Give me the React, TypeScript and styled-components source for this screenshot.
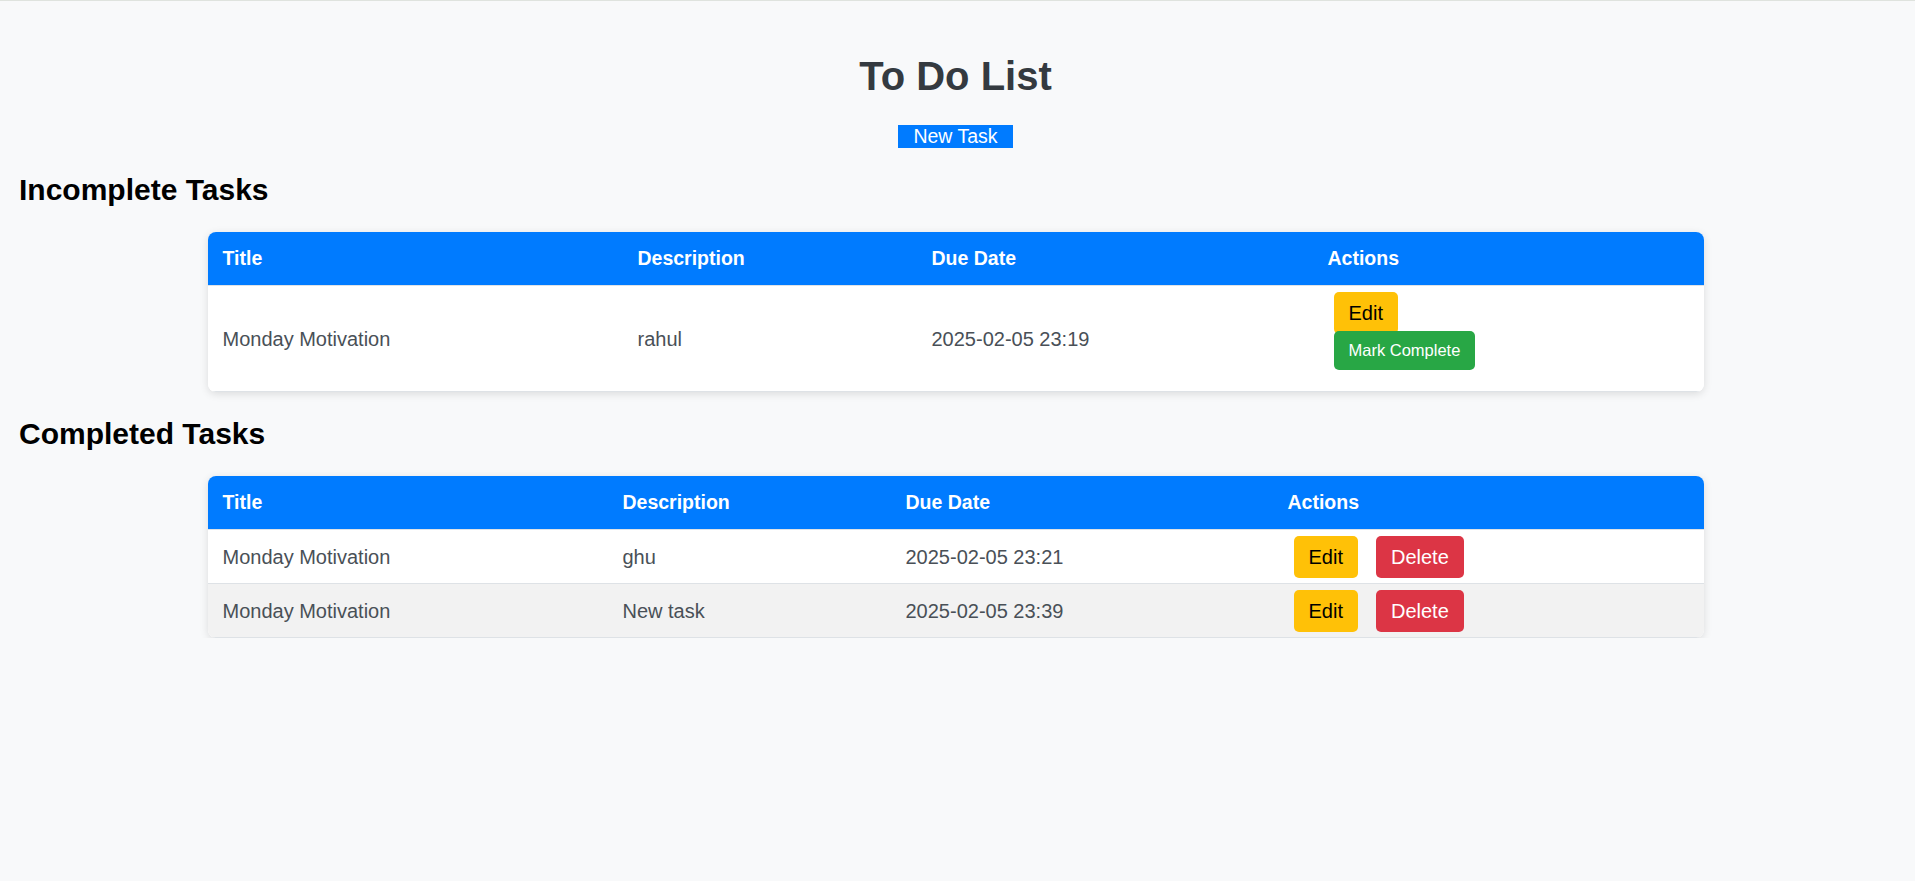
import styled, { createGlobalStyle } from "styled-components";

const GlobalStyle = createGlobalStyle`
  body {
    margin: 0;
    background-color: #f8f9fa;
    border-top: 1px solid #dfe3de;
    font-family: "Liberation Sans", Arial, sans-serif;
  }
`;

const Page = styled.div`
  display: flex;
  flex-direction: column;
  padding: 0 23px 0 19px;
`;

const Title = styled.h1`
  margin: 52px 0 26px;
  text-align: center;
  font-size: 40px;
  line-height: 46px;
  font-weight: bold;
  color: #343a40;
`;

const NewTaskButton = styled.button`
  align-self: center;
  padding: 0 15px;

  font-family: inherit;
  font-size: 19.5px;
  line-height: 23px;
  color: #fff;

  border: none;
  border-radius: 0;
  background-color: #007bff;
  cursor: pointer;
`;

const SectionHeading = styled.h2`
  margin: 25px 0 24.5px;
  font-size: 30px;
  line-height: 34.5px;
  font-weight: bold;
  color: #000;
`;

const Table = styled.table`
  width: 1496px;
  align-self: center;
  table-layout: fixed;
  border-collapse: separate;
  border-spacing: 0;

  background-color: #fff;
  border-radius: 8px;
  overflow: hidden;
  box-shadow: 0 2px 9px rgba(0, 0, 0, 0.12);
`;

const Col = styled.col<{ $width: number }>`
  width: ${(p) => p.$width}px;
`;

const HeadCell = styled.th`
  padding: 15px;
  text-align: left;
  font-size: 19.5px;
  line-height: 23px;
  font-weight: bold;
  color: #fff;
  background-color: #007bff;
  border-bottom: 1px solid #dee2e6;
`;

const Row = styled.tr<{ $striped?: boolean }>`
  background-color: ${(p) => (p.$striped ? "#f2f2f2" : "#fff")};
`;

const Cell = styled.td`
  padding: 6px 15px 5px;
  font-size: 20px;
  line-height: 23px;
  color: #495057;
  vertical-align: middle;
  border-bottom: 1px solid #dee2e6;
`;

const Actions = styled.div<{ $stacked?: boolean }>`
  display: flex;
  flex-direction: ${(p) => (p.$stacked ? "column" : "row")};
  align-items: flex-start;
  gap: ${(p) => (p.$stacked ? "0" : "18px")};
  margin-left: 6px;
  padding-bottom: ${(p) => (p.$stacked ? "16px" : "0")};
`;

const colors = {
  edit: { bg: "#ffc107", fg: "#000" },
  delete: { bg: "#dc3545", fg: "#fff" },
  complete: { bg: "#28a745", fg: "#fff" },
};

const ActionButton = styled.button<{ $kind: "edit" | "delete" }>`
  padding: 9.5px 15px;
  font-family: inherit;
  font-size: 20px;
  line-height: 23px;
  color: ${(p) => colors[p.$kind].fg};

  border: none;
  border-radius: 5px;
  background-color: ${(p) => colors[p.$kind].bg};
  cursor: pointer;
`;

// sits 3px up into the Edit button, like in the original
const CompleteButton = styled.button`
  margin-top: -3px;
  padding: 10px 15px;
  font-family: inherit;
  font-size: 16.5px;
  line-height: 19px;
  color: ${colors.complete.fg};

  border: none;
  border-radius: 5px;
  background-color: ${colors.complete.bg};
  cursor: pointer;
`;

type Task = {
  title: string;
  description: string;
  dueDate: string;
};

const incompleteTasks: Task[] = [
  { title: "Monday Motivation", description: "rahul", dueDate: "2025-02-05 23:19" },
];

const completedTasks: Task[] = [
  { title: "Monday Motivation", description: "ghu", dueDate: "2025-02-05 23:21" },
  { title: "Monday Motivation", description: "New task", dueDate: "2025-02-05 23:39" },
];

const TaskTable = ({
  tasks,
  widths,
  completed,
}: {
  tasks: Task[];
  widths: number[];
  completed?: boolean;
}) => {
  return (
    <Table>
      <colgroup>
        {widths.map((w, i) => (
          <Col key={i} $width={w} />
        ))}
      </colgroup>
      <thead>
        <tr>
          <HeadCell>Title</HeadCell>
          <HeadCell>Description</HeadCell>
          <HeadCell>Due Date</HeadCell>
          <HeadCell>Actions</HeadCell>
        </tr>
      </thead>
      <tbody>
        {tasks.map((task, i) => (
          <Row key={i} $striped={i % 2 === 1}>
            <Cell>{task.title}</Cell>
            <Cell>{task.description}</Cell>
            <Cell>{task.dueDate}</Cell>
            <Cell>
              {completed ? (
                <Actions>
                  <ActionButton $kind="edit">Edit</ActionButton>
                  <ActionButton $kind="delete">Delete</ActionButton>
                </Actions>
              ) : (
                <Actions $stacked>
                  <ActionButton $kind="edit">Edit</ActionButton>
                  <CompleteButton>Mark Complete</CompleteButton>
                </Actions>
              )}
            </Cell>
          </Row>
        ))}
      </tbody>
    </Table>
  );
};

const App = () => {
  return (
    <>
      <GlobalStyle />
      <Page>
        <Title>To Do List</Title>
        <NewTaskButton>New Task</NewTaskButton>

        <SectionHeading>Incomplete Tasks</SectionHeading>
        <TaskTable tasks={incompleteTasks} widths={[415, 294, 396, 391]} />

        <SectionHeading>Completed Tasks</SectionHeading>
        <TaskTable tasks={completedTasks} widths={[400, 283, 382, 431]} completed />
      </Page>
    </>
  );
};

export default App;
